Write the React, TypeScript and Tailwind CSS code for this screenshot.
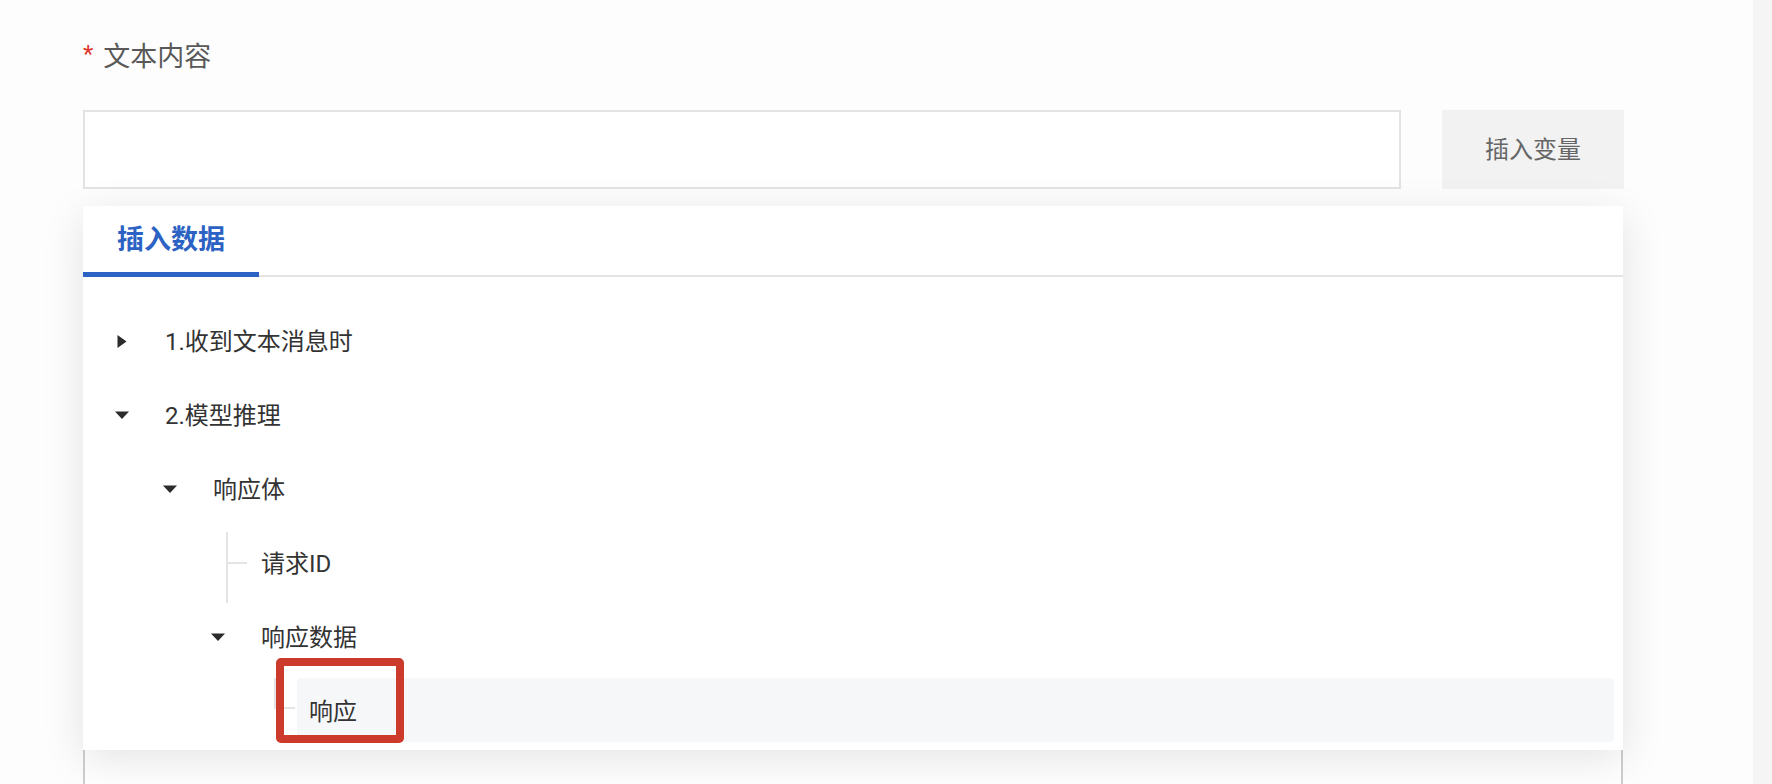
import React from "react";

type Node = {
  level: number;
  label: string;
  kind: "closed" | "open" | "leaf-mid" | "leaf-last";
  active?: boolean;
};

const rows: Node[] = [
  { level: 0, label: "1.收到文本消息时", kind: "closed" },
  { level: 0, label: "2.模型推理", kind: "open" },
  { level: 1, label: "响应体", kind: "open" },
  { level: 2, label: "请求ID", kind: "leaf-mid" },
  { level: 2, label: "响应数据", kind: "open" },
  { level: 3, label: "响应", kind: "leaf-last", active: true },
];

const indentClass = ["w-0", "w-[48px]", "w-[96px]", "w-[144px]"];

function Switcher({ kind }: { kind: Node["kind"] }) {
  if (kind === "closed") {
    return (
      <svg width="10" height="13" viewBox="0 0 10 13" className="mt-[2px] block">
        <polygon points="0.5,0 9.5,6.5 0.5,13" fill="#2b2b2b" />
      </svg>
    );
  }
  if (kind === "open") {
    return (
      <svg width="14" height="8" viewBox="0 0 14 8" className="mt-[2px] block">
        <polygon points="0,0.5 14,0.5 7,8" fill="#2b2b2b" />
      </svg>
    );
  }
  if (kind === "leaf-mid") {
    return (
      <>
        <span className="absolute left-[32px] top-[2px] h-[71px] w-[2px] bg-[#e4e4e4]" />
        <span className="absolute left-[32px] top-[32px] h-[2px] w-[21px] bg-[#e4e4e4]" />
      </>
    );
  }
  return (
    <>
      <span className="absolute left-[32px] top-0 h-[31px] w-[2px] bg-[#e4e4e4]" />
      <span className="absolute left-[32px] top-[29px] h-[2px] w-[21px] bg-[#e4e4e4]" />
    </>
  );
}

export default function App() {
  return (
    <div className="flex h-[784px] w-full overflow-hidden bg-[#fdfdfd] font-['Roboto','Noto_Sans_CJK_SC',sans-serif]">
      <div className="relative flex-1 pl-[83px] pt-[40px]">
        {/* Label */}
        <div className="flex h-[34px] items-center">
          <span className="mr-[10px] -mt-[6px] text-[24px] leading-none text-[#e0352b]">*</span>
          <span className="text-[27px] leading-none text-[#595959]">文本内容</span>
        </div>

        {/* Input row */}
        <div className="mt-[36px] flex gap-[41px]">
          <div className="h-[79px] w-[1318px] border-2 border-[#e3e3e3] bg-white" />
          <button className="flex h-[79px] w-[182px] items-center justify-center bg-[#f2f2f2] text-[24px] text-[#666666]">
            插入变量
          </button>
        </div>

        {/* Field behind the dropdown */}
        <div className="mt-[520px] h-[200px] w-[1540px] border-2 border-[#cfcfcf] bg-white" />

        {/* Dropdown panel */}
        <div className="absolute left-[83px] top-[206px] h-[544px] w-[1540px] bg-white shadow-[0_10px_40px_rgba(0,0,0,0.11)]">
          <div className="relative h-[71px] border-b-2 border-[#e3e3e3]">
            <div className="relative flex h-full w-[176px] items-center justify-center">
              <span className="text-[27px] font-semibold text-[#2b62c3]">插入数据</span>
              <span className="absolute bottom-[-2px] left-0 h-[5px] w-full bg-[#2b62c3]" />
            </div>
          </div>

          <div className="flex flex-col gap-[10px] pr-[9px] pt-[31px]">
            {rows.map((r, i) => (
              <div key={i} className="flex h-[64px] items-stretch pl-[15px]">
                <div className={indentClass[r.level]} />
                <div className="relative flex w-[48px] items-center justify-center">
                  <Switcher kind={r.kind} />
                </div>
                <div
                  className={
                    "ml-[7px] flex flex-1 items-center rounded-[4px] pl-[12px] pt-[4px] text-[24px] text-[#333333] " +
                    (r.active ? "bg-[#f6f7f9]" : "")
                  }
                >
                  {r.label}
                </div>
              </div>
            ))}
          </div>

          {/* Annotation box */}
          <div className="absolute left-[193px] top-[452px] h-[85px] w-[128px] rounded-[5px] border-[8px] border-[#cb3a2a]" />
        </div>
      </div>
      <div className="h-full w-[19px] bg-[#f5f5f5]" />
    </div>
  );
}
